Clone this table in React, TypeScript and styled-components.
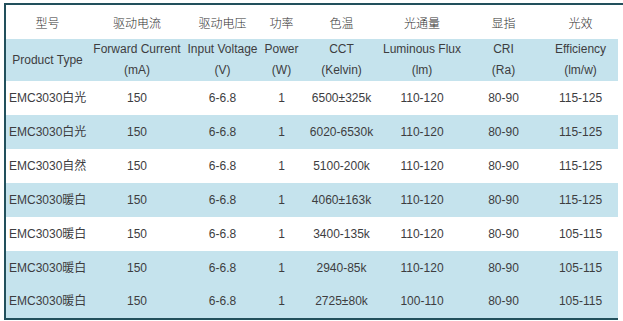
import * as React from 'react';
import styled, { createGlobalStyle } from 'styled-components';

const GlobalStyle = createGlobalStyle`
  html, body {
    margin: 0;
    padding: 0;
    background: #fff;
  }
  body {
    font-family: 'Liberation Sans', Arial, 'Noto Sans CJK SC', sans-serif;
  }
`;

const rowBlue = '#c5e3ed';
const frame = '#22505c';

const Page = styled.div`
  padding: 3px 0 0 4px;
`;

// top rule runs out past the table, left/bottom rules stop at the table
const Frame = styled.div`
  border-top: 2px solid ${frame};
  width: 619px;
`;

const Table = styled.table`
  border-collapse: separate;
  border-spacing: 0;
  border-left: 2px solid ${frame};
  border-bottom: 2px solid ${frame};
  table-layout: fixed;
  width: 614px;
  color: #3d3d3f;
  font-size: 12px;
`;

const Row = styled.tr<{ $blue?: boolean; $h: number }>`
  background: ${(p) => (p.$blue ? rowBlue : '#fff')};
  height: ${(p) => p.$h}px;
`;

const Cell = styled.td<{ $left?: boolean }>`
  padding: 0;
  text-align: ${(p) => (p.$left ? 'left' : 'center')};
  padding-left: ${(p) => (p.$left ? '3px' : '0')};
  white-space: nowrap;
  line-height: 21px;
  vertical-align: middle;
  font-weight: normal;
`;

const CnHead = styled(Cell)`
  font-family: 'Noto Sans CJK SC', sans-serif;
  font-weight: 300;
  font-size: 12px;
  color: #333;
`;

const cols = [83, 96, 75, 43, 77, 84, 79, 75];

const cnHeads = ['型号', '驱动电流', '驱动电压', '功率', '色温', '光通量', '显指', '光效'];

const enHeads: [string, string][] = [
  ['Product Type', ''],
  ['Forward Current', '(mA)'],
  ['Input Voltage', '(V)'],
  ['Power', '(W)'],
  ['CCT', '(Kelvin)'],
  ['Luminous Flux', '(lm)'],
  ['CRI', '(Ra)'],
  ['Efficiency', '(lm/w)'],
];

const rows = [
  ['EMC3030白光', '150', '6-6.8', '1', '6500±325k', '110-120', '80-90', '115-125'],
  ['EMC3030白光', '150', '6-6.8', '1', '6020-6530k', '110-120', '80-90', '115-125'],
  ['EMC3030自然', '150', '6-6.8', '1', '5100-200k', '110-120', '80-90', '115-125'],
  ['EMC3030暖白', '150', '6-6.8', '1', '4060±163k', '110-120', '80-90', '115-125'],
  ['EMC3030暖白', '150', '6-6.8', '1', '3400-135k', '110-120', '80-90', '105-115'],
  ['EMC3030暖白', '150', '6-6.8', '1', '2940-85k', '110-120', '80-90', '105-115'],
  ['EMC3030暖白', '150', '6-6.8', '1', '2725±80k', '100-110', '80-90', '105-115'],
];

// last two rows share the blue band in the original sheet
const blueRows = [false, true, false, true, false, true, true];

export default function App() {
  return (
    <Page>
      <GlobalStyle />
      <Frame>
        <Table>
          <colgroup>
            {cols.map((w, i) => (
              <col key={i} style={{ width: w }} />
            ))}
          </colgroup>
          <thead>
            <Row $h={34}>
              {cnHeads.map((h) => (
                <CnHead as="th" key={h}>
                  {h}
                </CnHead>
              ))}
            </Row>
            <Row $blue $h={42}>
              {enHeads.map(([a, b]) => (
                <Cell as="th" key={a}>
                  {a}
                  {b && <br />}
                  {b}
                </Cell>
              ))}
            </Row>
          </thead>
          <tbody>
            {rows.map((r, i) => (
              <Row key={i} $blue={blueRows[i]} $h={i === rows.length - 1 ? 33 : 34}>
                {r.map((v, j) => (
                  <Cell key={j} $left={j === 0}>
                    {v}
                  </Cell>
                ))}
              </Row>
            ))}
          </tbody>
        </Table>
      </Frame>
    </Page>
  );
}
